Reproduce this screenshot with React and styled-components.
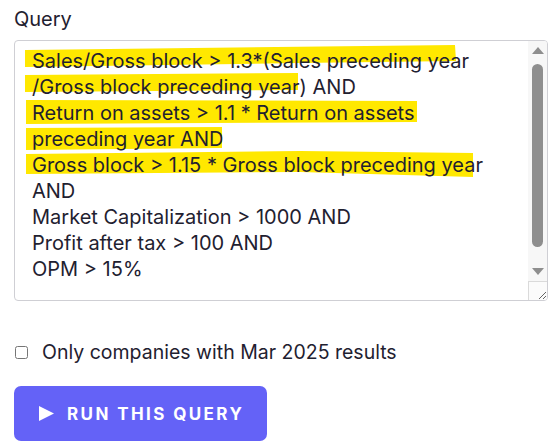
import React from "react";
import styled, { createGlobalStyle } from "styled-components";

const Global = createGlobalStyle`
  html, body { margin: 0; padding: 0; background: #ffffff; }
  body { font-family: Inter, "Noto Sans", sans-serif; color: #1f2130; }
`;

const Page = styled.div`
  padding: 6px 5px 0 14px;
  display: flex;
  flex-direction: column;
  align-items: flex-start;
`;

const Label = styled.label`
  font-size: 20px;
  line-height: 26px;
  font-weight: 400;
  color: #1f2130;
  margin-bottom: 8px;
`;

const QueryBox = styled.div`
  position: relative;
  box-sizing: border-box;
  width: 534px;
  height: 261px;
  border: 1px solid #cfcfd4;
  border-radius: 4px;
  overflow: hidden;
  resize: vertical;
  background: #fff;
`;

const Marks = styled.svg`
  position: absolute;
  top: 0;
  left: 0;
  z-index: 0;
  pointer-events: none;
`;

const Lines = styled.div`
  position: relative;
  z-index: 1;
  padding: 7px 24px 0 17px;
  font-size: 20px;
  line-height: 26px;
  white-space: nowrap;
  color: #1f2130;
`;

const Line = styled.div``;

const ScrollTrack = styled.div`
  position: absolute;
  z-index: 2;
  top: 0;
  right: 0;
  width: 19px;
  height: 241px;
  background: #f7f7f7;
  display: flex;
  flex-direction: column;
  align-items: center;
`;

const Arrow = styled.svg`
  display: block;
  margin-top: ${(p) => p.$mt}px;
`;

const Thumb = styled.div`
  width: 11px;
  height: 183px;
  margin-top: 10px;
  border-radius: 6px;
  background: #8e8e8e;
`;

const Corner = styled.div`
  position: absolute;
  z-index: 2;
  right: 0;
  bottom: 0;
  box-sizing: border-box;
  width: 19px;
  height: 19px;
  border-top: 1px solid #dadada;
  border-left: 1px solid #dadada;
  background: #fbfbfb;
`;

const CheckRow = styled.label`
  display: flex;
  align-items: center;
  gap: 14px;
  margin-top: 39px;
  font-size: 19.5px;
  line-height: 24px;
  color: #1f2130;
`;

const Check = styled.input`
  margin: 1px 0 0 1px;
  width: 13px;
  height: 13px;
`;

const RunButton = styled.button`
  margin-top: 22px;
  box-sizing: border-box;
  width: 253px;
  height: 55px;
  display: flex;
  align-items: center;
  gap: 13px;
  padding: 0 0 0 25px;
  border: none;
  border-radius: 7px;
  background: #6462f7;
  color: #ffffff;
  font-family: Inter, "Noto Sans", sans-serif;
  font-size: 17px;
  font-weight: 700;
  letter-spacing: 2.4px;
  cursor: pointer;
`;

const lines = [
  "Sales/Gross block > 1.3*(Sales preceding year",
  "/Gross block preceding year) AND",
  "Return on assets > 1.1 * Return on assets",
  "preceding year AND",
  "Gross block > 1.15 * Gross block preceding year",
  "AND",
  "Market Capitalization > 1000 AND",
  "Profit after tax > 100 AND",
  "OPM > 15%",
];

const highlights = [
  "10,9 440,4 441,20 285,22 10,26",
  "10,34 283,32 283,49 10,51",
  "11,59 402,60 402,81 11,83",
  "11,87 207,86 207,107 11,109",
  "11,113 285,110 458,112 458,136 285,131 11,133",
];

export default function App() {
  return (
    <>
      <Global />
      <Page>
        <Label>Query</Label>
        <QueryBox>
          <Marks width="480" height="150" viewBox="0 0 480 150">
            {highlights.map((p, i) => (
              <polygon key={i} points={p} fill="#ffe800" />
            ))}
          </Marks>
          <Lines>
            {lines.map((l, i) => (
              <Line key={i}>{l}</Line>
            ))}
          </Lines>
          <ScrollTrack>
            <Arrow $mt={6} width="12" height="7" viewBox="0 0 12 7">
              <polygon points="6,0 12,7 0,7" fill="#8e8e8e" />
            </Arrow>
            <Thumb />
            <Arrow $mt={21} width="12" height="7" viewBox="0 0 12 7">
              <polygon points="0,0 12,0 6,7" fill="#8e8e8e" />
            </Arrow>
          </ScrollTrack>
          <Corner />
        </QueryBox>
        <CheckRow>
          <Check type="checkbox" />
          Only companies with Mar 2025 results
        </CheckRow>
        <RunButton>
          <svg width="15" height="15" viewBox="0 0 15 15">
            <polygon points="0,0 15,7.5 0,15" fill="#ffffff" />
          </svg>
          RUN THIS QUERY
        </RunButton>
      </Page>
    </>
  );
}
